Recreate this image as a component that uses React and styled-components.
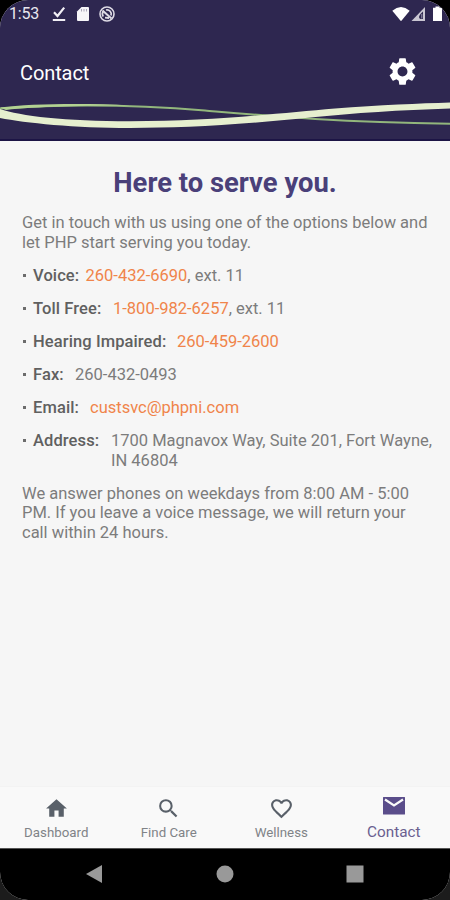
import React from 'react';
import styled, { createGlobalStyle } from 'styled-components';
import { MdSettings, MdHome, MdSearch, MdFavoriteBorder } from 'react-icons/md';

const GlobalStyle = createGlobalStyle`
  * {
    box-sizing: border-box;
  }

  body {
    margin: 0;
    background: linear-gradient(#000 50%, #1c1c1c 50%);
    font-family: Roboto, "Liberation Sans", sans-serif;
  }
`;

const Screen = styled.div`
  display: flex;
  flex-direction: column;
  width: 450px;
  height: 900px;
  overflow: hidden;
  border-radius: 28px;
  background: #f6f6f6;
`;

const Header = styled.header`
  display: flex;
  flex-direction: column;
  height: 141px;
  background: #2e2750;
  border-bottom: 2px solid #1c1445;
  color: #fff;
`;

const StatusBar = styled.div`
  display: flex;
  align-items: center;
  justify-content: space-between;
  height: 28px;
  padding: 0 8px 0 9px;
`;

const StatusGroup = styled.div`
  display: flex;
  align-items: center;
`;

const Clock = styled.span`
  width: 42px;
  font-size: 16px;
  line-height: 28px;
  letter-spacing: -0.2px;
  color: #e8e6ee;
`;

const StatusIcon = styled.svg`
  display: block;
  width: ${(props) => props.$width}px;
  height: 16px;
  margin-left: ${(props) => props.$gap || 0}px;
`;

const TitleBar = styled.div`
  display: flex;
  align-items: center;
  justify-content: space-between;
  height: 70px;
  padding: 17px 31px 0 20px;
`;

const Title = styled.h1`
  margin: 0;
  padding-top: 2px;
  font-size: 20px;
  font-weight: 400;
  letter-spacing: -0.1px;
`;

const Swoosh = styled.svg`
  display: block;
  width: 450px;
  height: 40px;
`;

const Content = styled.main`
  flex: 1;
  padding: 26px 14px 0 22px;
  color: #7c7c7c;
  font-size: 16.5px;
  line-height: 19.5px;
`;

const Heading = styled.h2`
  margin: 0 0 14px;
  padding-right: 8px;
  color: #4a4079;
  font-size: 27.4px;
  font-weight: 700;
  line-height: 32px;
  text-align: center;
`;

const Paragraph = styled.p`
  margin: 0;
  white-space: pre-line;
`;

const ContactList = styled.ul`
  display: flex;
  flex-direction: column;
  gap: 13.6px;
  margin: 13.6px 0;
  padding: 0;
  list-style: none;
`;

const ContactItem = styled.li`
  display: flex;

  &::before {
    content: '';
    width: 3px;
    height: 3px;
    margin: 8px 7px 0 1px;
    background: #6c6c6c;
    flex-shrink: 0;
  }
`;

const Label = styled.span`
  width: ${(props) => props.$width}px;
  flex-shrink: 0;
  color: #606060;
  font-weight: 500;
  letter-spacing: 0.1px;
`;

const Value = styled.span`
  white-space: pre-line;
`;

const Link = styled.a`
  color: #f0844a;
  text-decoration: none;
`;

const TabBar = styled.nav`
  display: grid;
  grid-template-columns: repeat(4, 112.5px);
  height: 62px;
  background: #f9f9f9;
  border-top: 1px solid #f3f3f3;
`;

const Tab = styled.div`
  display: flex;
  flex-direction: column;
  align-items: center;
  padding-top: ${(props) => (props.$active ? 6 : 9)}px;
  color: ${(props) => (props.$active ? '#5a4d8a' : '#596069')};
`;

const TabLabel = styled.span`
  margin-top: ${(props) => (props.$active ? 4 : 3)}px;
  color: ${(props) => (props.$active ? '#6a6090' : '#808387')};
  font-size: ${(props) => (props.$active ? 15.3 : 13.3)}px;
  line-height: 18px;
`;

const SystemBar = styled.div`
  display: flex;
  justify-content: center;
  gap: 112px;
  height: 52px;
  padding-top: 16px;
  background: #000;
  border-top: 1px solid #555;
`;

const SystemIcon = styled.svg`
  width: 18px;
  height: 18px;
  fill: #999;
`;

// Envelope with square corners
const Envelope = ({ size }) => (
  <svg width={size} height={size} viewBox="0 0 26 26">
    <path d="M2.500 4h21q.5 0 .5.5v16.500q0 .5-.5.5h-21q-.5 0-.5-.5V4.500q0-.5.5-.5z" fill="currentColor" />
    <path d="m4 6.500 9 6 9-6" fill="none" stroke="#f9f9f9" strokeWidth="2.2" />
  </svg>
);

const contacts = [
  { label: 'Voice:', width: 52.5, link: '260-432-6690', text: ', ext. 11' },
  { label: 'Toll Free:', width: 80, link: '1-800-982-6257', text: ', ext. 11' },
  { label: 'Hearing Impaired:', width: 144, link: '260-459-2600' },
  { label: 'Fax:', width: 42, text: '260-432-0493' },
  { label: 'Email:', width: 57, link: 'custsvc@phpni.com' },
  { label: 'Address:', width: 78, text: '1700 Magnavox Way, Suite 201, Fort Wayne,\nIN 46804' },
];

const tabs = [
  { label: 'Dashboard', icon: MdHome },
  { label: 'Find Care', icon: MdSearch },
  { label: 'Wellness', icon: MdFavoriteBorder },
  { label: 'Contact', icon: Envelope, active: true },
];

const App = () => (
  <>
    <GlobalStyle />
    <Screen>
      <Header>
        <StatusBar>
          <StatusGroup>
            <Clock>1:53</Clock>
            {/* Download finished */}
            <StatusIcon $width={16} viewBox="0 0 16 16" fill="none" stroke="#f1eff5" strokeWidth="2.2">
              <path d="M3 6.3 6.5 10 13.2 1.6M1.8 14h12.4" />
            </StatusIcon>
            {/* SD card */}
            <StatusIcon $width={14} $gap={9} viewBox="0 0 14 16">
              <path d="M5.5 1H12q1 0 1 1v12q0 1-1 1H2q-1 0-1-1V5.5z" fill="#f6f5f8" />
              <path d="M5.5 3v2.5M8 3v2.5M10.5 3v2.5" stroke="#aaa6b8" />
            </StatusIcon>
            {/* Sync circle */}
            <StatusIcon $width={18} $gap={8} viewBox="0 0 18 16" fill="none" stroke="#dedbe5">
              <circle cx="9" cy="8" r="7" strokeWidth="1.6" />
              <path d="M5.300 10.500A4.300 4.300 0 0 1 5.800 5M8 4A4.200 4.200 0 0 1 13 9.500M7 11.700 11 12" strokeWidth="1.8" />
              <path d="m4.500 4.500 9 8" strokeWidth="2" />
            </StatusIcon>
          </StatusGroup>
          <StatusGroup>
            <StatusIcon $width={18} viewBox="0 0 18 16">
              <path d="M.3 4.7Q9-2.5 17.7 4.7L9 15.2z" fill="#fff" />
            </StatusIcon>
            <StatusIcon $width={15} $gap={1} viewBox="0 0 15 16">
              <path d="M14 1v14H.5z" fill="#c9c6d2" />
              <path d="M12 5.500V13H9.500Q6.500 11.500 9.500 8z" fill="#2e2750" />
              <path d="M10.800 8v4.500" stroke="#9c97ad" fill="none" />
            </StatusIcon>
            <StatusIcon $width={9} $gap={7} viewBox="0 0 9 16">
              <path d="M2.5.5h4v1.3H9V15H0V1.8h2.5z" fill="#fff" />
            </StatusIcon>
          </StatusGroup>
        </StatusBar>
        <TitleBar>
          <Title>Contact</Title>
          <MdSettings size={33} />
        </TitleBar>
        <Swoosh viewBox="0 98 450 40">
          <path
            d="M0 108.5C70 103.500 140 105 205 110.500S335 122 450 123.700"
            fill="none"
            stroke="#92b67c"
            strokeWidth="2"
          />
          <path d="M0 107.500C30 103.800 85 103 130 105.500 85 105.500 35 106.500 6 110z" fill="#b3d292" />
          <path
            d="M0 109C20 116 65 121.300 130 121.300 215 121.300 280 113 335 108.500 380 105 420 103.500 450 102.500V108.500C400 110 355 113 310 117.500 240 125 180 128 130 128 75 128 25 123 0 118z"
            fill="#e6efcf"
          />
        </Swoosh>
      </Header>

      <Content>
        <Heading>Here to serve you.</Heading>
        <Paragraph>
          {'Get in touch with us using one of the options below and\nlet PHP start serving you today.'}
        </Paragraph>
        <ContactList>
          {contacts.map((item) => (
            <ContactItem key={item.label}>
              <Label $width={item.width}>{item.label}</Label>
              <Value>
                {item.link && <Link>{item.link}</Link>}
                {item.text}
              </Value>
            </ContactItem>
          ))}
        </ContactList>
        <Paragraph>
          {'We answer phones on weekdays from 8:00 AM - 5:00\nPM. If you leave a voice message, we will return your\ncall within 24 hours.'}
        </Paragraph>
      </Content>

      <TabBar>
        {tabs.map(({ label, icon: Icon, active }) => (
          <Tab key={label} $active={active}>
            <Icon size={active ? 26 : 25} />
            <TabLabel $active={active}>{label}</TabLabel>
          </Tab>
        ))}
      </TabBar>
      <SystemBar>
        <SystemIcon viewBox="0 0 18 18">
          <path d="M16 0v18L0 9z" />
        </SystemIcon>
        <SystemIcon viewBox="0 0 18 18">
          <circle cx="9" cy="9" r="8.5" />
        </SystemIcon>
        <SystemIcon viewBox="0 0 18 18">
          <path d="M.5.5h17v17H.5z" />
        </SystemIcon>
      </SystemBar>
    </Screen>
  </>
);

export default App;
